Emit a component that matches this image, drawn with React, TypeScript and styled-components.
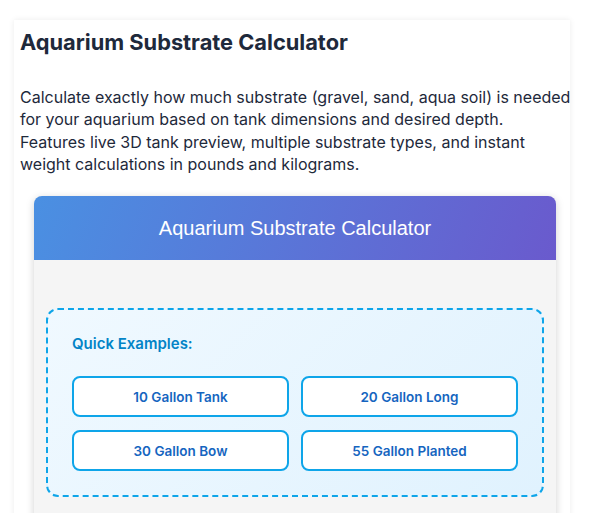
import styled, { createGlobalStyle } from "styled-components";

const GlobalStyle = createGlobalStyle`
    html, body {
        margin: 0;
        padding: 0;
        background: #ffffff;
        font-family: Inter, "Noto Sans", sans-serif;
        color: #1e293b;
    }
`;

const Page = styled.div`
    padding: 20px 0 40px 14px;
    min-height: 7300px;
`;

const Article = styled.article`
    width: 556px;
    box-sizing: border-box;
    padding: 9px 0 24px 6px;
    background: #ffffff;
    box-shadow: 0 0 6px rgba(0, 0, 0, 0.08);
`;

const Title = styled.h1`
    margin: 0 0 31px;
    font-size: 21.8px;
    line-height: 1.2;
    font-weight: 700;
    color: #1e293b;
`;

const Intro = styled.p`
    margin: 0;
    font-size: 16px;
    line-height: 22.3px;
    color: #1e293b;
    width: 551px;
`;

const Widget = styled.section`
    margin: 21px 0 0 14px;
    width: 522px;
    border-radius: 8px;
    overflow: hidden;
    background: #f5f5f5;
    box-shadow: 0 2px 8px rgba(0, 0, 0, 0.18);
`;

const WidgetHeader = styled.header`
    height: 64px;
    display: flex;
    align-items: center;
    justify-content: center;
    background: linear-gradient(110deg, #4a90e2 0%, #6a5acd 100%);
    color: #ffffff;
    font-family: "Liberation Sans", Arial, sans-serif;
    font-size: 20px;
`;

const WidgetBody = styled.div`
    padding: 48px 12px 24px;
    display: flex;
    flex-direction: column;
    gap: 24px;
`;

const ExamplesBox = styled.div`
    border: 2px dashed #0ea5e9;
    border-radius: 12px;
    padding: 22px 24px 24px;
    background: linear-gradient(135deg, #f0f9ff 0%, #e0f2fe 100%);
`;

const ExamplesLabel = styled.div`
    font-size: 15px;
    line-height: 24px;
    font-weight: 600;
    color: #0284c7;
    margin-bottom: 20px;
`;

const ExampleGrid = styled.div`
    display: grid;
    grid-template-columns: 1fr 1fr;
    column-gap: 12px;
    row-gap: 13px;
`;

const ExampleButton = styled.button`
    height: 41px;
    border: 2px solid #0ea5e9;
    border-radius: 8px;
    background: #ffffff;
    color: #1565c0;
    font-family: Inter, "Noto Sans", sans-serif;
    font-size: 13.5px;
    font-weight: 600;
    cursor: pointer;
`;

const Section = styled.div`
    background: #ffffff;
    border-radius: 8px;
    padding: 20px;
`;

const SectionTitle = styled.h3`
    margin: 0 0 12px;
    font-size: 16px;
    color: #334155;
`;

const Field = styled.label`
    display: flex;
    flex-direction: column;
    gap: 6px;
    font-size: 14px;
    color: #475569;
    margin-bottom: 12px;
`;

const Input = styled.input`
    height: 36px;
    border: 1px solid #cbd5e1;
    border-radius: 6px;
    padding: 0 10px;
    font-size: 14px;
`;

const examples = ["10 Gallon Tank", "20 Gallon Long", "30 Gallon Bow", "55 Gallon Planted"];

export default function App() {
    return <>
        <GlobalStyle />
        <Page>
            <Article>
                <Title>Aquarium Substrate Calculator</Title>
                <Intro>
                    Calculate exactly how much substrate (gravel, sand, aqua soil) is needed for your aquarium based on tank dimensions and desired depth. Features live 3D tank preview, multiple substrate types, and instant weight calculations in pounds and kilograms.
                </Intro>
                <Widget>
                    <WidgetHeader>Aquarium Substrate Calculator</WidgetHeader>
                    <WidgetBody>
                        <ExamplesBox>
                            <ExamplesLabel>Quick Examples:</ExamplesLabel>
                            <ExampleGrid>
                                {examples.map((e) => (
                                    <ExampleButton key={e}>{e}</ExampleButton>
                                ))}
                            </ExampleGrid>
                        </ExamplesBox>
                        <Section>
                            <SectionTitle>Tank Dimensions</SectionTitle>
                            <Field>Length (inches)<Input defaultValue="20" /></Field>
                            <Field>Width (inches)<Input defaultValue="10" /></Field>
                            <Field>Substrate Depth (inches)<Input defaultValue="2" /></Field>
                        </Section>
                    </WidgetBody>
                </Widget>
            </Article>
        </Page>
    </>;
}
